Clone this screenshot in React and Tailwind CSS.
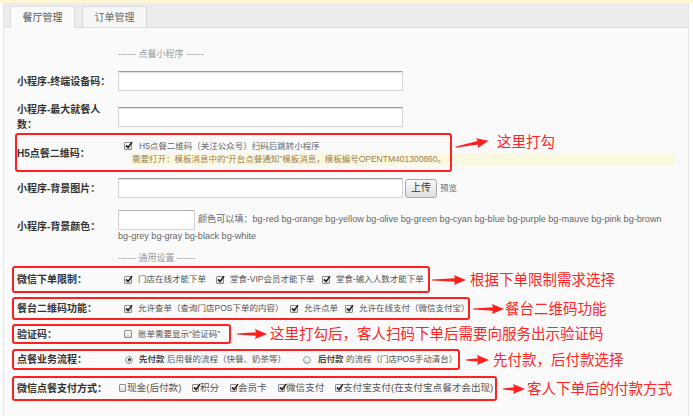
import React from 'react';

const Label = ({ children }) => (
  <div className="w-[101px] shrink-0 text-[10px] font-bold leading-[15px] text-[#333]">{children}</div>
);

const Input = ({ className = '' }) => (
  <div className={`shrink-0 border border-[#d4d4d4] border-t-[#9c9c9c] bg-white shadow-[inset_0_1px_1px_rgba(0,0,0,0.12)] ${className}`} />
);

function Check({ on = true, small = false }) {
  return (
    <span
      className={`relative inline-block shrink-0 rounded-[1px] border border-[#8c8c8c] bg-gradient-to-b from-white to-[#d9d9d9] ${
        small ? 'w-[7px] h-[8px]' : 'w-[8px] h-[8px]'
      }`}
    >
      {on && (
        <svg viewBox="0 0 10 10" className="absolute -top-[2px] left-[0px] w-[8px] h-[8px]">
          <path d="M1.2 5.4 L3.9 8.2 L8.8 1.4" fill="none" stroke="#222" strokeWidth="2" />
        </svg>
      )}
    </span>
  );
}

function Radio({ on }) {
  return (
    <span className="inline-flex w-[8px] h-[8px] shrink-0 items-center justify-center rounded-full border border-[#9a9a9a] bg-gradient-to-b from-white to-[#d6d6d6]">
      {on && <span className="w-[3px] h-[3px] rounded-full bg-[#333]" />}
    </span>
  );
}

function Arrow({ w = 33, className = '' }) {
  return (
    <svg width={w} height="12" viewBox={`0 0 ${w} 12`} className={`shrink-0 ${className}`}>
      <polygon
        points={`0,5.5 ${w - 11},4.2 ${w - 12},1 ${w},6 ${w - 12},11 ${w - 11},7.8 0,6.5`}
        fill="#ff1f1f"
      />
    </svg>
  );
}

const Note = ({ children, className = '' }) => (
  <div className={`shrink-0 whitespace-nowrap text-[14.5px] leading-[20px] text-[#ff2525] ${className}`}>{children}</div>
);

const Opt = ({ on = true, className = '', children }) => (
  <div className={`flex shrink-0 items-center gap-[6px] whitespace-nowrap ${className}`}>
    <Check on={on} />
    <span>{children}</span>
  </div>
);

export default function App() {
  return (
    <div className="w-[693px] h-[416px] overflow-hidden bg-white font-['Liberation_Sans','Noto_Sans_CJK_SC',sans-serif] text-[8.5px] text-[#555]">
      <div className="h-[3px] bg-[#fdf5d6]" />
      <div className="ml-[3px] w-[686px] h-[413px] border-x border-[#e4e4e4] bg-[#fafafa]">
        {/* tabs */}
        <div className="h-[25px] flex items-end gap-[7px] pl-[6px] bg-[#ececec] border-b border-[#dedede]">
          <div className="-mb-px w-[65px] h-[22px] flex items-center justify-center border border-b-0 border-[#dcdcdc] bg-[#fafafa] text-[10px] text-[#555]">
            餐厅管理
          </div>
          <div className="w-[65px] h-[21px] flex items-center justify-center border border-b-0 border-[#d8d8d8] bg-[#f6f6f6] text-[10px] text-[#666]">
            订单管理
          </div>
        </div>

        <div className="mt-[20px] ml-[114px] text-[9px] leading-[12px] text-[#999]">------ 点餐小程序 ------</div>

        <div className="mt-[11px] ml-[13px] h-[20px] flex items-center">
          <Label>小程序-终端设备码：</Label>
          <Input className="w-[285px] h-[20px]" />
        </div>

        <div className="mt-[11px] ml-[13px] flex items-center">
          <Label>
            小程序-最大就餐人
            <br />
            数：
          </Label>
          <Input className="w-[285px] h-[20px]" />
        </div>

        {/* H5 row */}
        <div className="mt-[1px] flex items-start">
          <div className="relative ml-[11px] w-[437px] h-[39px] flex items-start pl-[2px]">
            <div className="pointer-events-none absolute inset-0 z-10 rounded-[3px] border-2 border-[#ff1f1f]" />
            <div className="pt-[13px]">
              <Label>H5点餐二维码：</Label>
            </div>
            <div className="pt-[7px] leading-[12px]">
              <div className="ml-[6px] h-[12px] flex items-center gap-[7px] whitespace-nowrap text-[#666]">
                <Check />
                <span>H5点餐二维码（关注公众号）扫码后跳转小程序</span>
              </div>
              <div className="mt-px ml-[12px] w-[545px] h-[12px] pl-[2px] whitespace-nowrap bg-[#fcf9e1] text-[#9d7d4f]">
                需要打开：模板消息中的“开台点餐通知”模板消息，模板编号OPENTM401300860。
              </div>
            </div>
          </div>
          <Arrow w={34} className="ml-[3px] mt-[5px] -rotate-[11deg]" />
          <Note className="ml-[8px] -mt-[1px]">这里打勾</Note>
        </div>

        <div className="mt-[6px] ml-[13px] h-[20px] flex items-center">
          <Label>小程序-背景图片：</Label>
          <Input className="w-[285px] h-[20px]" />
          <button className="ml-[2px] w-[32px] h-[19px] rounded-[3px] border border-[#a8a8a8] bg-gradient-to-b from-[#fbfbfb] to-[#dedede] text-[10px] leading-none text-[#333]">
            上传
          </button>
          <span className="ml-[3px] text-[#666]">预览</span>
        </div>

        <div className="mt-[12px] ml-[13px] flex items-center">
          <Label>小程序-背景颜色：</Label>
          <div className="w-[556px] text-[9.1px] leading-[13px] text-[#666]">
            <span className="inline-block align-middle w-[77px] h-[20px] mr-[3px] border border-[#d4d4d4] border-t-[#b0b0b0] bg-white" />
            颜色可以填：bg-red bg-orange bg-yellow bg-olive bg-green bg-cyan bg-blue bg-purple bg-mauve bg-pink bg-brown bg-grey bg-gray bg-black bg-white
          </div>
        </div>

        <div className="mt-[9px] ml-[114px] text-[9px] leading-[12px] text-[#999]">------ 通用设置 ------</div>

        {/* 微信下单限制 */}
        <div className="mt-[2px] flex items-center">
          <div className="ml-[8px] w-[418px] h-[27px] flex items-center pl-[3px] rounded-[3px] border-2 border-[#ff1f1f]">
            <Label>微信下单限制：</Label>
            <Opt className="ml-[6px] w-[92px]">门店在线才能下单</Opt>
            <Opt className="w-[106px]">堂食-VIP会员才能下单</Opt>
            <Opt>堂食-输入人数才能下单</Opt>
          </div>
          <Arrow w={34} className="ml-[2px]" />
          <Note className="ml-[4px]">根据下单限制需求选择</Note>
        </div>

        {/* 餐台二维码功能 */}
        <div className="mt-[4px] flex items-center">
          <div className="ml-[8px] w-[458px] h-[23px] flex items-center pl-[3px] rounded-[3px] border-2 border-[#ff1f1f]">
            <Label>餐台二维码功能：</Label>
            <Opt className="ml-[6px] w-[166px]">允许查单（查询门店POS下单的内容）</Opt>
            <Opt className="w-[55px]">允许点单</Opt>
            <Opt>允许在线支付（微信支付宝）</Opt>
          </div>
          <Arrow w={31} className="ml-[3px]" />
          <Note className="ml-[1px]">餐台二维码功能</Note>
        </div>

        {/* 验证码 */}
        <div className="mt-[4px] flex items-center">
          <div className="ml-[8px] w-[219px] h-[20px] flex items-center pl-[3px] rounded-[3px] border-2 border-[#ff1f1f]">
            <Label>验证码：</Label>
            <Opt on={false} className="ml-[6px]">账单需要显示“验证码”</Opt>
          </div>
          <Arrow w={30} className="ml-[6px]" />
          <Note className="ml-[3px]">这里打勾后，客人扫码下单后需要向服务出示验证码</Note>
        </div>

        {/* 点餐业务流程 */}
        <div className="mt-[5px] flex items-center">
          <div className="ml-[8px] w-[448px] h-[21px] flex items-center pl-[3px] rounded-[3px] border-2 border-[#ff1f1f]">
            <Label>点餐业务流程：</Label>
            <div className="ml-[7px] w-[178px] flex shrink-0 items-center gap-[6px] whitespace-nowrap">
              <Radio on />
              <span>
                <b className="text-[#444]">先付款</b> 后用餐的流程（快餐、奶茶等）
              </span>
            </div>
            <div className="flex shrink-0 items-center gap-[7px] whitespace-nowrap">
              <Radio />
              <span>
                <b className="text-[#444]">后付款</b> 的流程（门店POS手动清台）
              </span>
            </div>
          </div>
          <Arrow w={23} className="ml-[6px]" />
          <Note className="ml-[4px]">先付款，后付款选择</Note>
        </div>

        {/* 微信点餐支付方式 */}
        <div className="mt-[6px] flex items-center">
          <div className="ml-[8px] w-[485px] h-[25px] flex items-center pl-[3px] rounded-[3px] border-2 border-[#ff1f1f]">
            <Label>微信点餐支付方式：</Label>
            <div className="flex items-center text-[9.6px]">
              {[
                ['现金(后付款)', false, 'ml-[1px] w-[73px]'],
                ['积分', true, 'w-[38px]'],
                ['会员卡', true, 'w-[48px]'],
                ['微信支付', true, 'w-[57px]'],
                ['支付宝支付(在支付宝点餐才会出现)', true, ''],
              ].map(([t, on, cls]) => (
                <div key={t} className={`flex shrink-0 items-center gap-[1px] whitespace-nowrap ${cls}`}>
                  <Check on={on} small />
                  <span>{t}</span>
                </div>
              ))}
            </div>
          </div>
          <Arrow w={22} className="ml-[6px]" />
          <Note className="ml-[2px]">客人下单后的付款方式</Note>
        </div>
      </div>
    </div>
  );
}
